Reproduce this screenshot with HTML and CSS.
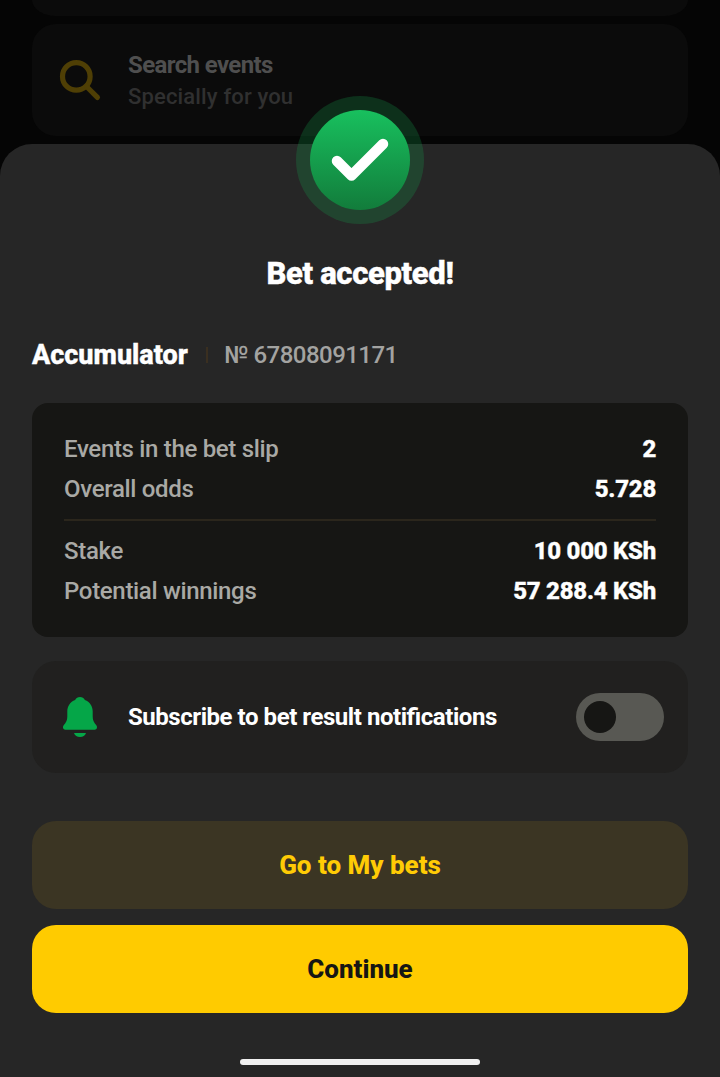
FILE: index.html
```
<!DOCTYPE html>
<html lang="en">
<head>
    <meta charset="UTF-8">
    <meta name="viewport" content="width=device-width, initial-scale=1.0">
    <title>Bet accepted</title>
    <link rel="stylesheet" href="styles.css">
</head>
<body>
    <div class="page-behind">
        <div class="menu-card menu-card-prev"></div>
        <div class="menu-card">
            <svg width="48" height="48" viewBox="0 0 48 48" fill="none" stroke="#4f3f05" stroke-width="5.2" stroke-linecap="round">
                <circle cx="20.3" cy="20.4" r="13.8"/>
                <path d="M30.5 30.5L41.4 41.4"/>
            </svg>
            <div class="menu-text">
                <div class="menu-title">Search events</div>
                <div class="menu-subtitle">Specially for you</div>
            </div>
        </div>
    </div>

    <div class="sheet">
        <div class="badge">
            <svg width="128" height="128" viewBox="0 0 128 128" fill="none">
                <defs>
                    <linearGradient id="badgeFill" x1="0" y1="14" x2="0" y2="114" gradientUnits="userSpaceOnUse">
                        <stop stop-color="#18c05e"/>
                        <stop offset="1" stop-color="#127c3b"/>
                    </linearGradient>
                </defs>
                <circle cx="64" cy="64" r="64" fill="#14a84e" fill-opacity="0.24"/>
                <circle cx="64" cy="64" r="50" fill="url(#badgeFill)"/>
                <path d="M41 65L55.5 79.5L87 48" stroke="#fff" stroke-width="10.5" stroke-linecap="round" stroke-linejoin="round"/>
            </svg>
        </div>

        <h1 class="title">Bet accepted!</h1>

        <div class="bet-info">
            <span class="bet-type">Accumulator</span>
            <span class="bet-sep"></span>
            <span class="bet-number">№ 67808091171</span>
        </div>

        <div class="details">
            <div class="row">
                <span class="label">Events in the bet slip</span>
                <span class="value">2</span>
            </div>
            <div class="row">
                <span class="label">Overall odds</span>
                <span class="value">5.728</span>
            </div>
            <div class="line"></div>
            <div class="row">
                <span class="label">Stake</span>
                <span class="value">10 000 KSh</span>
            </div>
            <div class="row">
                <span class="label">Potential winnings</span>
                <span class="value">57 288.4 KSh</span>
            </div>
        </div>

        <div class="subscribe">
            <svg width="48" height="48" viewBox="0 0 48 48" fill="#05a648">
                <path d="M24 4C21.8 4 20 5.1 19.1 6.9C14.2 8.7 11.3 13 11.3 18.3V23.5C11.3 27.4 10.1 29.6 7.7 32.2C6.9 33.1 6.9 34.2 7.1 35.1C7.4 36.1 8.2 36.7 9.3 36.7H38.7C39.8 36.7 40.6 36.1 40.9 35.1C41.1 34.2 41.1 33.1 40.3 32.2C37.9 29.6 36.7 27.4 36.7 23.5V18.3C36.7 13 33.8 8.7 28.9 6.9C28 5.1 26.2 4 24 4Z"/>
                <path d="M18 40H30C29.2 42.4 27 44 24 44C21 44 18.8 42.4 18 40Z"/>
            </svg>
            <span class="subscribe-text">Subscribe to bet result notifications</span>
            <div class="switch"><div class="switch-knob"></div></div>
        </div>

        <div class="buttons">
            <button class="btn btn-secondary">Go to My bets</button>
            <button class="btn btn-primary">Continue</button>
        </div>

        <div class="home-bar"></div>
    </div>
</body>
</html>
```
FILE: styles.css
```
* {
    box-sizing: border-box;
}
body {
    margin: 0;
    height: 1077px;
    background: #050505;
    color: #fff;
    font-family: Roboto, 'Liberation Sans', sans-serif;
    overflow: hidden;
}
/* Dimmed page behind the sheet */
.page-behind {
    height: 144px;
    padding: 0 32px;
    display: flex;
    flex-direction: column;
    gap: 8px;
}
.menu-card {
    height: 112px;
    flex-shrink: 0;
    background: #0b0b0b;
    border-radius: 24px;
    padding: 0 24px;
    display: flex;
    align-items: center;
    gap: 24px;
}
.menu-card-prev {
    height: 16px;
    border-radius: 0 0 24px 24px / 0 0 16px 16px;
}
.menu-text {
    padding-top: 2px;
}
.menu-title {
    color: #4f4f4f;
    font-size: 24px;
    line-height: 32px;
    font-weight: 700;
    letter-spacing: -0.62px;
}
.menu-subtitle {
    color: #303030;
    font-size: 22px;
    line-height: 32px;
    font-weight: 500;
    letter-spacing: 0.15px;
}
/* Bottom sheet */
.sheet {
    position: relative;
    height: 933px;
    padding: 108px 32px 0;
    background: #262626;
    border-radius: 32px 32px 0 0;
}
.badge {
    position: absolute;
    top: -48px;
    left: 50%;
    width: 128px;
    height: 128px;
    margin-left: -64px;
}
.title {
    margin: 0;
    font-size: 31px;
    line-height: 44px;
    font-weight: 800;
    letter-spacing: -0.33px;
    text-align: center;
    -webkit-text-stroke: 0.5px #fff;
}
.bet-info {
    margin-top: 39px;
    height: 40px;
    display: flex;
    align-items: center;
}
.bet-type {
    width: 156px;
    font-size: 27px;
    font-weight: 800;
    letter-spacing: 0;
    -webkit-text-stroke: 0.4px #fff;
}
.bet-sep {
    width: 2px;
    height: 16px;
    margin: 0 16px 0 18px;
    background: #3a2f20;
}
.bet-number {
    color: #a3a3a1;
    font-size: 24px;
    font-weight: 500;
    letter-spacing: -0.52px;
}
.details {
    margin-top: 28px;
    padding: 26px 32px;
    background: #161614;
    border-radius: 16px;
}
.row {
    height: 40px;
    display: flex;
    align-items: center;
    justify-content: space-between;
}
.label {
    color: #a9a9a5;
    font-size: 24px;
    font-weight: 500;
    letter-spacing: -0.32px;
}
.value {
    font-size: 24px;
    font-weight: 800;
    letter-spacing: -0.25px;
    -webkit-text-stroke: 0.4px #fff;
}
.line {
    height: 2px;
    margin: 10px 0;
    background: #2b261c;
}
.subscribe {
    margin-top: 24px;
    height: 112px;
    padding: 0 24px;
    background: #21201f;
    border-radius: 24px;
    display: flex;
    align-items: center;
    gap: 24px;
}
.subscribe-text {
    flex: 1;
    font-size: 24px;
    font-weight: 700;
    letter-spacing: -0.45px;
    font-feature-settings: "liga" 1;
}
.switch {
    width: 88px;
    height: 48px;
    padding: 8px;
    background: #585853;
    border-radius: 24px;
}
.switch-knob {
    width: 32px;
    height: 32px;
    background: #161614;
    border-radius: 50%;
}
.buttons {
    margin-top: 48px;
    display: flex;
    flex-direction: column;
    gap: 16px;
}
.btn {
    height: 88px;
    border: none;
    border-radius: 24px;
    font-family: inherit;
    font-size: 26px;
    font-weight: 800;
    letter-spacing: -0.02px;
    cursor: pointer;
}
.btn-secondary {
    background: #3b3523;
    color: #ffcb05;
}
.btn-primary {
    background: #ffcb00;
    color: #161614;
}
.home-bar {
    width: 240px;
    height: 6px;
    margin: 46px auto 0;
    background: #f0f0f0;
    border-radius: 3px;
}
```
